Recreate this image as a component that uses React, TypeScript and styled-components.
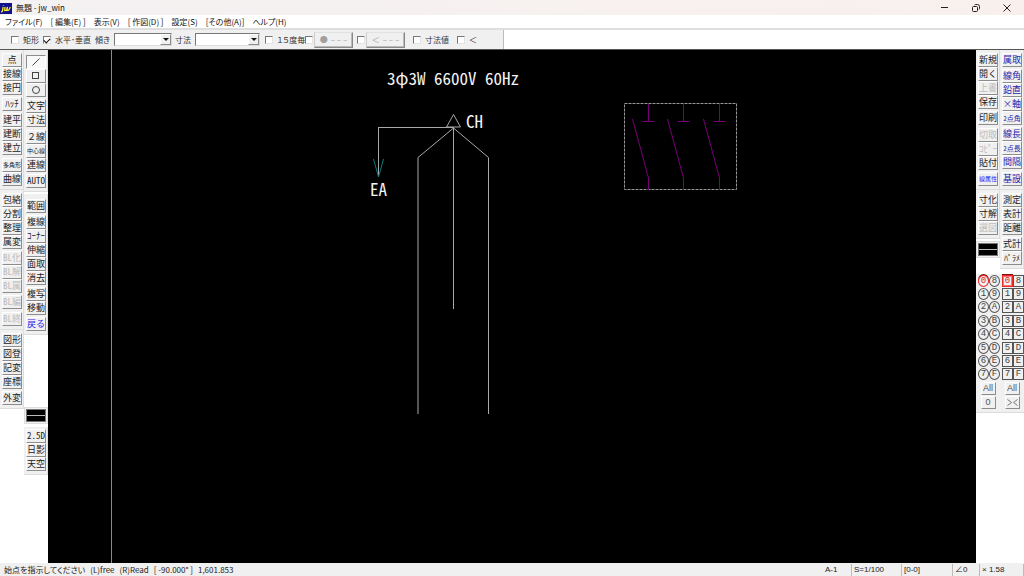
import React from "react";
import styled, { createGlobalStyle, css } from "styled-components";

const Global = createGlobalStyle`
  * { box-sizing: border-box; }
  body {
    margin: 0;
    background: #fff;
    color: #333;
    font: 8px/12px "Noto Sans CJK JP", "Liberation Sans", sans-serif;
    font-feature-settings: "palt";
  }
  button, input, select { font: inherit; color: inherit; margin: 0; padding: 0; }
`;

const face = "#f0f0f0";
const bevel = css`
  border: 1px solid;
  border-color: #fff #8c8c8c #8c8c8c #fff;
`;

const Window = styled.div`
  min-height: 100vh;
  display: flex;
  flex-direction: column;
`;

const TitleBar = styled.header`
  display: flex;
  align-items: center;
  height: 15px;
  gap: 4px;
  background: linear-gradient(90deg, #f4f1f2, #f9f0ee);
`;

const Title = styled.h1`
  flex: 1;
  margin: 0;
  font-size: 8px;
  line-height: 14px;
  font-weight: 400;
  color: #111;
`;

const WindowButton = styled.button`
  width: 31px;
  height: 15px;
  border: 0;
  background: none;
  display: grid;
  place-items: center;
  color: #222;
`;

const WindowButtons = styled.div`
  display: flex;
  margin-right: 2px;
`;

const MenuBar = styled.nav`
  display: flex;
  height: 15px;
  padding: 0 5px;
  gap: 8px;
  background: #fff;
  border-bottom: 2px solid #dedede;
`;

const MenuItem = styled.a`
  line-height: 13px;
  color: #111;
  text-decoration: none;
  white-space: pre;
`;

const OptionBar = styled.form`
  display: flex;
  height: 20px;
  background: #fff;
  border-bottom: 1px solid #555;
`;

const OptionPanel = styled.div`
  display: flex;
  align-items: center;
  width: 504px;
  padding-left: 11px;
  background: ${face};
  border-right: 1px solid #bbb;
`;

const Option = styled.div<{ $width: number }>`
  display: flex;
  align-items: center;
  gap: 4px;
  width: ${(p) => p.$width}px;
  white-space: nowrap;
`;

const Check = styled.input`
  appearance: none;
  flex: none;
  width: 8px;
  height: 8px;
  background: #fff;
  border: 1px solid;
  border-color: #777 #e3e3e3 #e3e3e3 #777;
  display: grid;
  place-items: center;
  &:checked::after {
    content: "";
    width: 5px;
    height: 3px;
    border: solid #111;
    border-width: 0 0 1px 1px;
    transform: rotate(-45deg);
  }
`;

const ComboFrame = styled.span<{ $width: number }>`
  position: relative;
  display: flex;
  width: ${(p) => p.$width}px;
  height: 13px;
`;

const Combo = styled.select`
  appearance: none;
  width: 100%;
  background: #fff;
  border: 1px solid;
  border-color: #777 #ddd #ddd #777;
  border-radius: 0;
`;

const ComboArrow = styled.span`
  position: absolute;
  right: 1px;
  top: 1px;
  width: 11px;
  height: 11px;
  display: grid;
  place-items: center;
  background: ${face};
  pointer-events: none;
  ${bevel}
  &::after {
    content: "";
    border: 3px solid transparent;
    border-top-color: #111;
    border-bottom: 0;
  }
`;

const EndButton = styled.button`
  width: 39px;
  height: 16px;
  background: ${face};
  border: 1px solid;
  border-color: #e2e2e2 #888 #888 #ccc;
  box-shadow: inset -1px -1px #bbb;
  display: flex;
  align-items: center;
  justify-content: center;
  gap: 3px;
  color: #a0a0a0;
`;

const Workspace = styled.div`
  flex: 1;
  display: grid;
  grid-template-columns: 24px 24px minmax(0, 1fr) 24px 24px;
`;

const Column = styled.aside<{ $gap: number }>`
  display: flex;
  flex-direction: column;
  gap: ${(p) => p.$gap}px;
  min-width: 0;
  background: #fff;
`;

const Panel = styled.div<{ $top: number }>`
  display: flex;
  flex-direction: column;
  padding: ${(p) => p.$top}px 1px 3px 2px;
  background: ${face};
  border-right: 1px solid #ddd;
  box-shadow: 0 1px #ddd;
`;

const Group = styled.div<{ $wide?: boolean }>`
  display: flex;
  flex-direction: column;
  & + & { margin-top: 2px; }
  ${(p) => p.$wide && css`&& { margin-top: 3px; }`}
`;

const ToolButton = styled.button<{ $tone: string; $size: number; $pressed: boolean; $full: boolean }>`
  height: 14px;
  overflow: hidden;
  display: flex;
  align-items: center;
  justify-content: center;
  white-space: nowrap;
  background: ${(p) => (p.$pressed ? "#f9f9f9" : face)};
  color: ${(p) => p.$tone};
  font-size: ${(p) => p.$size}px;
  line-height: 12px;
  font-feature-settings: ${(p) => (p.$full ? "normal" : '"hwid"')};
  ${bevel}
  ${(p) => p.$pressed && css`border-color: #8c8c8c #fff #fff #8c8c8c;`}
`;

const SwatchPanel = styled.div<{ $before: number }>`
  margin-top: ${(p) => p.$before}px;
  padding: 1px;
  background: ${face};
  border: 1px solid #ddd;
`;

const Swatch = styled.button`
  display: flex;
  flex-direction: column;
  justify-content: center;
  width: 100%;
  height: 13px;
  background: #000;
  border: 1px solid #777;
  &::after { content: ""; height: 1px; width: 100%; background: #bbb; }
`;

const LayerPanel = styled.div<{ $before: number }>`
  margin-top: ${(p) => p.$before}px;
  padding-bottom: 3px;
  background: ${face};
  box-shadow: 0 1px #ddd;
`;

const LayerGrid = styled.div`
  display: grid;
  grid-template: repeat(8, 1fr) / 11px 11px;
  justify-content: end;
  align-items: center;
  justify-items: center;
  height: 107px;
`;

const LayerButton = styled.button<{ $round: boolean; $active: boolean }>`
  width: 11px;
  height: 12px;
  display: flex;
  align-items: flex-start;
  justify-content: center;
  font: 9px/11px "Liberation Mono", monospace;
  color: ${(p) => (p.$active ? "#e02020" : "#444")};
  background: ${face};
  border: 1px solid ${(p) => (p.$active ? "#f02828" : "#555")};
  border-radius: ${(p) => (p.$round ? "50%" : "0")};
  box-shadow: ${(p) =>
    p.$active ? (p.$round ? "0 -1px #801010" : "0 -1px #801010, inset 0 0 0 1px #f77") : "none"};
`;

const LayerFooter = styled.div`
  display: flex;
  flex-direction: column;
  align-items: center;
  gap: 1px;
  padding-top: 1px;
`;

const SmallButton = styled.button`
  width: 15px;
  height: 13px;
  display: grid;
  place-items: center;
  background: ${face};
  font: 9px/11px "Liberation Sans", sans-serif;
  color: #555;
  ${bevel}
`;

const Drawing = styled.main`
  background: #000;
  overflow: hidden;
  display: flex;
`;

const Sheet = styled.svg`
  width: 100%;
  height: 100%;
  min-height: 420px;
  fill: none;
  stroke: #a8a8a8;
  text {
    font: 17px "Noto Sans CJK JP", sans-serif;
    font-feature-settings: "hwid";
    fill: #f4f4f4;
    stroke: none;
    white-space: pre;
  }
`;

const StatusBar = styled.footer`
  display: flex;
  align-items: center;
  height: 13px;
  padding-left: 4px;
  background: ${face};
  color: #222;
  line-height: 12px;
  white-space: pre;
`;

const Message = styled.p`
  display: flex;
  gap: 5px;
  flex: 1;
  margin: 0;
`;

const StatusCell = styled.span<{ $width: number }>`
  width: ${(p) => p.$width}px;
  padding-left: 2px;
  border-right: 1px solid #bbb;
  font-family: "Liberation Sans", "Noto Sans CJK JP", sans-serif;
`;

type Tool = {
  name: string;
  tone?: string;
  size?: number;
  pressed?: boolean;
  off?: boolean;
  full?: boolean;
  icon?: React.ReactNode;
};
type ToolGroup = { tools: (Tool | string)[]; wide?: boolean };

const off = (name: string): Tool => ({ name, off: true });
const blue = (name: string, size = 9): Tool => ({ name, size, tone: "#2424a8" });

function ToolPanel({ groups, top = 3 }: { groups: ToolGroup[]; top?: number }) {
  return (
    <Panel $top={top}>
      {groups.map((g, i) => (
        <Group key={i} $wide={g.wide}>
          {g.tools.map((item) => {
            const t: Tool = typeof item === "string" ? { name: item } : item;
            return (
              <ToolButton
                key={t.name}
                type="button"
                disabled={t.off}
                aria-label={t.icon ? t.name : undefined}
                $tone={t.off ? "#bcbcbc" : t.tone ?? "#222"}
                $size={t.size ?? 9}
                $pressed={!!t.pressed}
                $full={!!t.full}
              >
                {t.icon ?? t.name}
              </ToolButton>
            );
          })}
        </Group>
      ))}
    </Panel>
  );
}

const glyph = (child: React.ReactNode) => (
  <svg width="12" height="12" fill="none" stroke="#444">
    {child}
  </svg>
);

const editTools: ToolGroup[][] = [
  [
    { tools: ["点", "接線", "接円"] },
    { tools: ["ﾊｯﾁ"] },
    { tools: ["建平", "建断", "建立"] },
    { tools: [{ name: "多角形", size: 6 }, "曲線"], wide: true },
  ],
  [
    { tools: ["包絡", "分割", "整理", "属変"] },
    { tools: [off("BL化"), off("BL解"), off("BL属")] },
    { tools: [off("BL編")] },
    { tools: [off("BL終")], wide: true },
  ],
  [{ tools: ["図形", "図登", "記変", "座標"] }, { tools: ["外変"] }],
];

const drawTools: ToolGroup[][] = [
  [
    {
      tools: [
        { name: "線", pressed: true, icon: glyph(<path d="M2.5 9.5l7-7" />) },
        { name: "矩形", icon: glyph(<rect x="2.5" y="2.5" width="6" height="6" />) },
        { name: "円", icon: glyph(<circle cx="6" cy="6" r="3.5" />) },
      ],
    },
    { tools: ["文字", "寸法"] },
    { tools: [{ name: "２線", full: true }, { name: "中心線", size: 6 }, "連線"], wide: true },
    { tools: ["AUTO"] },
  ],
  [
    { tools: ["範囲"] },
    { tools: ["複線", "ｺｰﾅｰ", "伸縮", "面取", "消去"] },
    { tools: ["複写", "移動"] },
    { tools: [{ name: "戻る", tone: "#1c1cf0" }] },
  ],
];

const fileTools: ToolGroup[][] = [
  [
    { tools: ["新規", "開く", off("上書"), "保存"] },
    { tools: ["印刷"] },
    { tools: [off("切取"), off("ｺﾋﾟｰ"), "貼付"], wide: true },
    { tools: [{ name: "線属性", size: 6, tone: "#1c1cf0" }] },
  ],
  [{ tools: ["寸化", "寸解", off("選図")] }],
];

const measureTools: ToolGroup[][] = [
  [
    { tools: [blue("属取")] },
    { tools: [blue("線角"), blue("鉛直"), blue("×軸"), blue("2点角", 7)] },
    { tools: [blue("線長"), blue("2点長", 7), blue("間隔")] },
    { tools: [blue("基設")], wide: true },
  ],
  [{ tools: ["測定", "表計", "距離"] }, { tools: ["式計", { name: "ﾊﾟﾗﾒ", size: 8 }] }],
];

const layerRows = ["0", "1", "2", "3", "4", "5", "6", "7"].map((n, i) => [n, "89ABCDEF"[i]]);

function Layers({ round, before, last }: { round: boolean; before: number; last: React.ReactNode }) {
  return (
    <LayerPanel $before={before}>
      <LayerGrid>
        {layerRows.flat().map((n) => (
          <LayerButton key={n} type="button" $round={round} $active={n === "0"}>
            {n}
          </LayerButton>
        ))}
      </LayerGrid>
      <LayerFooter>
        <SmallButton type="button">All</SmallButton>
        <SmallButton type="button">{last}</SmallButton>
      </LayerFooter>
    </LayerPanel>
  );
}

function CheckOption({ id, label, width, checked }: { id: string; label?: string; width: number; checked?: boolean }) {
  return (
    <Option $width={width}>
      <Check type="checkbox" id={id} defaultChecked={checked} aria-label={label ? undefined : id} />
      {label && <label htmlFor={id}>{label}</label>}
    </Option>
  );
}

function ComboOption({ id, label, width, field }: { id: string; label: string; width: number; field: number }) {
  return (
    <Option $width={width}>
      <label htmlFor={id}>{label}</label>
      <ComboFrame $width={field}>
        <Combo id={id} />
        <ComboArrow />
      </ComboFrame>
    </Option>
  );
}

const switches = [600.5, 635.5, 671.5];

export default function App() {
  return (
    <Window>
      <Global />
      <TitleBar>
        <svg width="12" height="13" viewBox="0 0 12 13">
          <path fill="#10108c" d="M0 2h12v11H0z" />
          <path
            d="M3.5 4.2v.6M3.2 6l-.8 4q-.2 1-1.4.8M5 6l-.3 3.4 1.8-.2L7.4 6l-.3 3.4 1.6-.2L10.4 6"
            fill="none"
            stroke="#f4e628"
            strokeWidth="1.3"
          />
        </svg>
        <Title>無題 - jw_win</Title>
        <WindowButtons>
          <WindowButton aria-label="最小化">
            <svg width="8" height="8" stroke="currentColor"><path d="M0 3.500h7" /></svg>
          </WindowButton>
          <WindowButton aria-label="元に戻す">
            <svg width="8" height="8" stroke="currentColor" fill="none">
              <rect x=".5" y="2.5" width="5" height="5" rx="1" />
              <path d="M2.500 1q.5-.5 1-.5h2q2 0 2 2v2q0 .5-.5 1" />
            </svg>
          </WindowButton>
          <WindowButton aria-label="閉じる">
            <svg width="8" height="8" stroke="currentColor"><path d="M.5.5l7 7M7.500.5l-7 7" /></svg>
          </WindowButton>
        </WindowButtons>
      </TitleBar>
      <MenuBar>
        {["ファイル(F)", "[ 編集(E) ]", "表示(V)", "[ 作図(D) ]", "設定(S)", "[その他(A)]", "ヘルプ(H)"].map((m) => (
          <MenuItem key={m} href="#">{m}</MenuItem>
        ))}
      </MenuBar>
      <OptionBar>
        <OptionPanel>
          <CheckOption id="rect" label="矩形" width={32} />
          <CheckOption id="ortho" label="水平･垂直" width={52} checked />
          <ComboOption id="angle" label="傾き" width={80} field={58} />
          <ComboOption id="length" label="寸法" width={90} field={65} />
          <CheckOption id="step15" label="１５度毎" width={40} />
          <CheckOption id="point-end" width={9} />
          <EndButton type="button" disabled>
            <span>●</span><span>– – –</span>
          </EndButton>
          <Option $width={4} />
          <CheckOption id="arrow-end" width={9} />
          <EndButton type="button" disabled>
            <span>＜</span><span>– – –</span>
          </EndButton>
          <Option $width={8} />
          <CheckOption id="show-size" label="寸法値" width={44} />
          <CheckOption id="arrow" label="＜" width={30} />
        </OptionPanel>
      </OptionBar>
      <Workspace>
        <Column $gap={1}>
          {editTools.map((g, i) => <ToolPanel key={i} groups={g} />)}
        </Column>
        <Column $gap={3}>
          {drawTools.map((g, i) => <ToolPanel key={i} groups={g} top={5} />)}
          <SwatchPanel $before={70}>
            <Swatch type="button" aria-label="線色" />
          </SwatchPanel>
          <ToolPanel groups={[{ tools: ["2.5D", "日影", "天空"] }]} top={2} />
        </Column>
        <Drawing>
          <Sheet>
            <path d="M63.500 0V2000" stroke="#8a8a8a" />
            <text x="339" y="35">3φ3W 6600V 60Hz</text>
            <text x="418" y="78">CH</text>
            <text x="322" y="146">EA</text>
            <path d="M405.500 64.500L398.500 77H412.500ZM330.500 77.500H406" />
            <path d="M330.500 77V127" />
            <path d="M325.500 109L330.500 127L335.500 109" stroke="#0a7c7c" />
            <path d="M405.500 77V259M370 364V107.500L405.500 78L440.500 107.500V364" />
            <rect x="576.500" y="53.500" width="112" height="86" strokeDasharray="3 1" stroke="#999" />
            {switches.map((x) => (
              <path key={x} stroke="#780078" d={`M${x} 54V71.500M${x - 6} 71.500h12M${x - 16} 69L${x} 128V140`} />
            ))}
          </Sheet>
        </Drawing>
        <Column $gap={1}>
          {fileTools.map((g, i) => <ToolPanel key={i} groups={g} />)}
          <SwatchPanel $before={2}>
            <Swatch type="button" aria-label="線種" />
          </SwatchPanel>
          <Layers round before={15} last="0" />
        </Column>
        <Column $gap={1}>
          {measureTools.map((g, i) => <ToolPanel key={i} groups={g} />)}
          <Layers
            round={false}
            before={5}
            last={
              <svg width="11" height="7" fill="none" stroke="#777">
                <path d="M.5.5l4 3-4 3M10.500.5l-4 3 4 3" />
              </svg>
            }
          />
        </Column>
      </Workspace>
      <StatusBar>
        <Message>
          <span>始点を指示してください</span>
          <span>(L)free</span>
          <span>(R)Read</span>
          <span>[ -90.000° ]</span>
          <span>1,601.853</span>
        </Message>
        <StatusCell $width={29}>A-1</StatusCell>
        <StatusCell $width={50}>S=1/100</StatusCell>
        <StatusCell $width={51}>[0-0]</StatusCell>
        <StatusCell $width={27}>∠0</StatusCell>
        <StatusCell $width={44}>× 1.58</StatusCell>
      </StatusBar>
    </Window>
  );
}
